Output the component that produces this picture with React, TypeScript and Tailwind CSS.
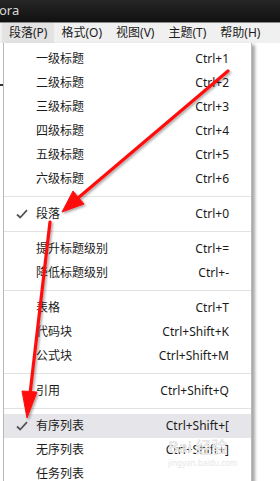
import React from 'react';

type Item =
  | { kind: 'sep' }
  | { kind: 'item'; label: string; keys: string; checked?: boolean; active?: boolean };

const MENU: Item[] = [
  { kind: 'item', label: '一级标题', keys: 'Ctrl+1' },
  { kind: 'item', label: '二级标题', keys: 'Ctrl+2' },
  { kind: 'item', label: '三级标题', keys: 'Ctrl+3' },
  { kind: 'item', label: '四级标题', keys: 'Ctrl+4' },
  { kind: 'item', label: '五级标题', keys: 'Ctrl+5' },
  { kind: 'item', label: '六级标题', keys: 'Ctrl+6' },
  { kind: 'sep' },
  { kind: 'item', label: '段落', keys: 'Ctrl+0', checked: true },
  { kind: 'sep' },
  { kind: 'item', label: '提升标题级别', keys: 'Ctrl+=' },
  { kind: 'item', label: '降低标题级别', keys: 'Ctrl+-' },
  { kind: 'sep' },
  { kind: 'item', label: '表格', keys: 'Ctrl+T' },
  { kind: 'item', label: '代码块', keys: 'Ctrl+Shift+K' },
  { kind: 'item', label: '公式块', keys: 'Ctrl+Shift+M' },
  { kind: 'sep' },
  { kind: 'item', label: '引用', keys: 'Ctrl+Shift+Q' },
  { kind: 'sep' },
  { kind: 'item', label: '有序列表', keys: 'Ctrl+Shift+[', checked: true, active: true },
  { kind: 'item', label: '无序列表', keys: 'Ctrl+Shift+]' },
  { kind: 'item', label: '任务列表', keys: '' },
];

const TOP_MENU = ['段落(P)', '格式(O)', '视图(V)', '主题(T)', '帮助(H)'];

function Check() {
  return (
    <svg width="12" height="10" viewBox="0 0 12 10" className="absolute left-[12px] top-1/2 -translate-y-1/2">
      <path d="M1 5.5 L4.2 8.5 L11 1.2" fill="none" stroke="#555" strokeWidth="1.8" />
    </svg>
  );
}

export default function App() {
  return (
    <div
      className="relative w-[280px] h-[481px] overflow-hidden bg-white text-[12px] text-[#1b1b1b]"
      style={{ fontFamily: '"Noto Sans", "Noto Sans CJK SC", sans-serif' }}
    >
      {/* window title bar */}
      <div className="h-[22px] bg-gradient-to-b from-[#262626] to-[#111] flex items-center text-[13px] text-[#d8d8d8] -ml-[1px]">
        ora
      </div>
      <div className="h-[1px] bg-[#8a8a8a]" />

      {/* menu bar */}
      <div className="h-[20px] bg-[#f0f0f0] flex items-center pl-[2px] whitespace-nowrap">
        {TOP_MENU.map((m, i) => (
          <div
            key={m}
            className={`h-full shrink-0 flex items-center px-[7px] leading-none ${i === 0 ? 'bg-[#e3e3e3]' : ''}`}
          >
            {m}
          </div>
        ))}
      </div>

      {/* dropdown panel */}
      <div className="relative flex">
        <div className="w-[3px] relative">
          <div className="absolute left-0 top-[41px] w-[3px] h-[2px] bg-[#333]" />
        </div>
        <div className="w-[249px] bg-white border-l border-r border-[#b9b9b9] shadow-[3px_2px_3px_rgba(0,0,0,0.35)] pt-[4px] pb-[10px]">
          {MENU.map((it, i) =>
            it.kind === 'sep' ? (
              <div key={i} className="h-[11px] flex items-center">
                <div className="h-[1px] w-full bg-[#e2e2e2]" />
              </div>
            ) : (
              <div
                key={i}
                className={`relative h-[24px] flex items-center justify-between pl-[32px] pr-[22px] whitespace-nowrap ${
                  it.active ? 'bg-[#e6e6ea]' : ''
                }`}
              >
                {it.checked && <Check />}
                <span>{it.label}</span>
                <span>{it.keys}</span>
              </div>
            )
          )}
        </div>
      </div>

      {/* watermark */}
      <div className="absolute left-[168px] top-[438px] text-[#e6e6e6] pointer-events-none">
        <div className="text-[16px] leading-[18px] font-bold tracking-tight">Bai 经验</div>
        <div className="text-[8px] leading-[10px] mt-[2px]">jingyan.baidu.com</div>
      </div>

      {/* red annotation arrows */}
      <svg className="absolute inset-0 pointer-events-none" width="280" height="481" viewBox="0 0 280 481">
        <defs>
          <filter id="sh" x="-20%" y="-20%" width="140%" height="140%">
            <feDropShadow dx="1.5" dy="1.5" stdDeviation="1.2" floodColor="#000" floodOpacity="0.35" />
          </filter>
        </defs>
        <g filter="url(#sh)" fill="#ff1010" stroke="#ff1010">
          <line x1="228" y1="71" x2="78" y2="198" strokeWidth="3.2" strokeLinecap="round" />
          <polygon points="62,212 84,204 73,191" strokeWidth="1" />
          <line x1="50" y1="222" x2="30" y2="394" strokeWidth="3.2" strokeLinecap="round" />
          <polygon points="27,418 37,392 22,391" strokeWidth="1" />
        </g>
      </svg>
    </div>
  );
}
